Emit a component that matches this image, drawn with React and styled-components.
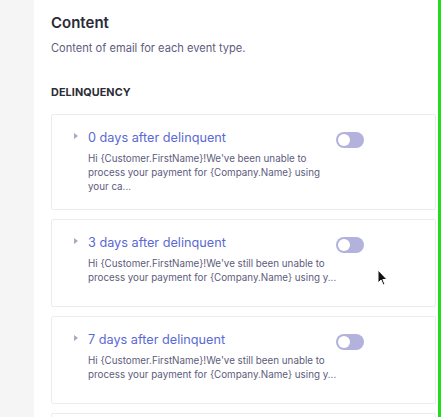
import React from "react";
import styled, { createGlobalStyle } from "styled-components";

const events = [
  {
    id: 0,
    title: "0 days after delinquent",
    body: "Hi {Customer.FirstName}!We've been unable to process your payment for {Company.Name} using your ca...",
    tall: true,
  },
  {
    id: 3,
    title: "3 days after delinquent",
    body: "Hi {Customer.FirstName}!We've still been unable to process your payment for {Company.Name} using y...",
  },
  {
    id: 7,
    title: "7 days after delinquent",
    body: "Hi {Customer.FirstName}!We've still been unable to process your payment for {Company.Name} using y...",
  },
  { id: 14, title: "", body: "" },
];

const GlobalStyle = createGlobalStyle`
  html, body {
    margin: 0;
    padding: 0;
    height: 100%;
    overflow: hidden;
    background: #f5f5f6;
    font-family: Inter, "Liberation Sans", sans-serif;
  }
  #root {
    height: 100%;
  }
`;

const Page = styled.div`
  display: flex;
  height: 417px;
  background: #f5f5f6;
`;

const Gutter = styled.div`
  width: 34px;
  flex-shrink: 0;
`;

const Panel = styled.main`
  flex: 1;
  background: #fff;
  border-right: 3px solid #1fdc1f;
  padding: 13px 2px 0 17px;
  overflow: hidden;
`;

const Heading = styled.h2`
  margin: 0;
  font-size: 15px;
  font-weight: 600;
  color: #2a2a38;
  line-height: 20px;
`;

const Subtitle = styled.p`
  margin: 8px 0 0;
  font-size: 11.1px;
  color: #5d5c80;
  line-height: 14px;
`;

const SectionLabel = styled.h3`
  margin: 31px 0 0;
  font-size: 10.8px;
  font-weight: 700;
  color: #2c2c36;
  letter-spacing: 0.1px;
  line-height: 14px;
`;

const List = styled.div`
  display: flex;
  flex-direction: column;
  gap: 9px;
  margin-top: 14px;
`;

const Card = styled.div`
  display: flex;
  align-items: flex-start;
  height: ${({ $tall }) => ($tall ? "96px" : "88px")};
  box-sizing: border-box;
  border: 1px solid #ececf0;
  border-radius: 2px;
  padding: 15px 0 0 22px;
`;

const Caret = styled.span`
  width: 0;
  height: 0;
  margin-top: 3px;
  margin-right: 10px;
  border-top: 3.5px solid transparent;
  border-bottom: 3.5px solid transparent;
  border-left: 4px solid #a9a9be;
`;

const Body = styled.div`
  width: 248px;
  flex-shrink: 0;
`;

const Title = styled.div`
  font-size: 12.7px;
  color: #5a69d4;
  line-height: 16px;
`;

const Preview = styled.div`
  width: 249px;
  margin-top: 6px;
  font-size: 9.8px;
  line-height: 14px;
  color: #5c5b7c;
`;

const Toggle = styled.span`
  position: relative;
  display: inline-block;
  width: 28px;
  height: 16px;
  margin-top: 2px;
  border-radius: 8px;
  background: #b2b2dc;
  &::after {
    content: "";
    position: absolute;
    left: 2px;
    top: 2px;
    width: 12px;
    height: 12px;
    border-radius: 50%;
    background: #fff;
  }
`;

const Pointer = styled.svg`
  position: absolute;
  left: 377px;
  top: 269px;
`;

export default function App() {
  return (
    <>
      <GlobalStyle />
      <Page>
        <Gutter />
        <Panel>
          <Heading>Content</Heading>
          <Subtitle>Content of email for each event type.</Subtitle>
          <SectionLabel>DELINQUENCY</SectionLabel>
          <List>
            {events.map((ev) => (
              <Card key={ev.id} $tall={ev.tall}>
                {ev.title && (
                  <>
                    <Caret />
                    <Body>
                      <Title>{ev.title}</Title>
                      <Preview>{ev.body}</Preview>
                    </Body>
                    <Toggle />
                  </>
                )}
              </Card>
            ))}
          </List>
        </Panel>
      </Page>
      <Pointer width="11" height="17" viewBox="0 0 11 17">
        <path
          d="M1 1 L1 14 L4 11 L6.3 16 L8 15.2 L5.8 10.5 L10 10.5 Z"
          fill="#111"
          stroke="#fff"
          strokeWidth="1"
          strokeLinejoin="round"
        />
      </Pointer>
    </>
  );
}
